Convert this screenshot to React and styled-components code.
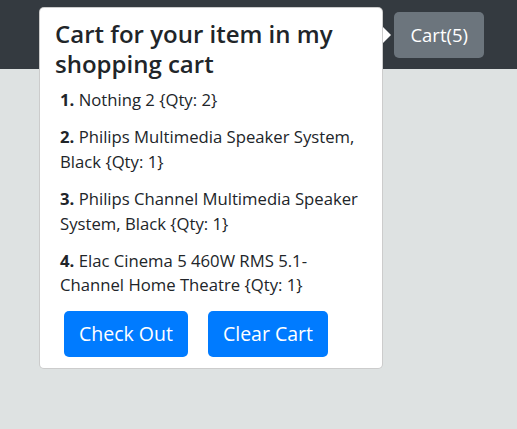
import styled, { createGlobalStyle } from 'styled-components';

const GlobalStyle = createGlobalStyle`
  body {
    margin: 0;
    background-color: #dee2e2;
    font-family: "Open Sans", "Noto Sans", sans-serif;
    color: #212529;
  }
`;

const Page = styled.div`
  position: relative;
  min-height: 429px;
`;

const Navbar = styled.nav`
  display: flex;
  justify-content: flex-end;
  align-items: center;
  height: 69px;
  padding: 0 33px 0 0;
  background-color: #343a40;
  box-sizing: border-box;
`;

const CartButton = styled.button`
  height: 46px;
  padding: 0 16px;
  border: none;
  border-radius: 5px;
  background-color: #6c757d;
  color: #fff;
  font-family: inherit;
  font-size: 18.5px;
`;

const Popover = styled.div`
  position: absolute;
  top: 7px;
  left: 39px;
  width: 344px;
  box-sizing: border-box;
  background: #fff;
  border: 1px solid rgba(0, 0, 0, 0.2);
  border-radius: 5px;
  padding-bottom: 11px;
`;

const Arrow = styled.div`
  position: absolute;
  top: 19px;
  right: -9px;
  width: 0;
  height: 0;
  border-top: 8px solid transparent;
  border-bottom: 8px solid transparent;
  border-left: 8px solid #fff;
`;

const Header = styled.h3`
  margin: 0;
  padding: 11px 15px 6px 15px;
  font-size: 24px;
  font-weight: 600;
  line-height: 1.25;
  color: #212529;
`;

const Body = styled.div`
  padding: 3px 12px 0 20px;
`;

const Item = styled.p`
  margin: 0 0 13px 0;
  font-size: 16.7px;
  line-height: 24.4px;
  color: #212529;
`;

const Actions = styled.div`
  display: flex;
  gap: 20px;
  padding: 0 0 0 24px;
`;

const ActionButton = styled.button`
  height: 46px;
  padding: 0 15px;
  border: none;
  border-radius: 5px;
  background-color: #007bff;
  color: #fff;
  font-family: inherit;
  font-size: 19.5px;
`;

const items = [
  { name: 'Nothing 2', qty: 2 },
  { name: 'Philips Multimedia Speaker System, Black', qty: 1 },
  { name: 'Philips Channel Multimedia Speaker System, Black', qty: 1 },
  { name: 'Elac Cinema 5 460W RMS 5.1-Channel Home Theatre', qty: 1 },
];

export default function App() {
  return (
    <Page>
      <GlobalStyle />
      <Navbar>
        <CartButton>Cart(5)</CartButton>
      </Navbar>
      <Popover>
        <Arrow />
        <Header>Cart for your item in my shopping cart</Header>
        <Body>
          {items.map((item, i) => (
            <Item key={i}>
              <b>{i + 1}.</b> {item.name} {'{'}Qty: {item.qty}{'}'}
            </Item>
          ))}
        </Body>
        <Actions>
          <ActionButton>Check Out</ActionButton>
          <ActionButton>Clear Cart</ActionButton>
        </Actions>
      </Popover>
    </Page>
  );
}
